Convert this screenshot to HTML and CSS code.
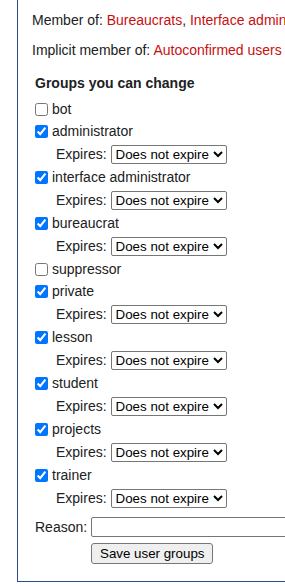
FILE: index.html
```html
<!DOCTYPE html>
<html>
<head>
    <title>User rights</title>
    <link rel="stylesheet" href="styles.css">
</head>
<body>
    <div class="box">
        <p class="member">Member of: <a href="#">Bureaucrats</a>, <a href="#">Interface admin</a></p>
        <p class="member implicit">Implicit member of: <a href="#">Autoconfirmed users</a></p>

        <div class="groups">
            <h4>Groups you can change</h4>

            <div class="group"><label><input type="checkbox"> bot</label></div>

            <div class="group"><label><input type="checkbox" checked> administrator</label></div>
            <div class="expiry">Expires: <select><option>Does not expire</option></select></div>

            <div class="group"><label><input type="checkbox" checked> interface administrator</label></div>
            <div class="expiry">Expires: <select><option>Does not expire</option></select></div>

            <div class="group"><label><input type="checkbox" checked> bureaucrat</label></div>
            <div class="expiry">Expires: <select><option>Does not expire</option></select></div>

            <div class="group"><label><input type="checkbox"> suppressor</label></div>

            <div class="group"><label><input type="checkbox" checked> private</label></div>
            <div class="expiry">Expires: <select><option>Does not expire</option></select></div>

            <div class="group"><label><input type="checkbox" checked> lesson</label></div>
            <div class="expiry">Expires: <select><option>Does not expire</option></select></div>

            <div class="group"><label><input type="checkbox" checked> student</label></div>
            <div class="expiry">Expires: <select><option>Does not expire</option></select></div>

            <div class="group"><label><input type="checkbox" checked> projects</label></div>
            <div class="expiry">Expires: <select><option>Does not expire</option></select></div>

            <div class="group"><label><input type="checkbox" checked> trainer</label></div>
            <div class="expiry">Expires: <select><option>Does not expire</option></select></div>
        </div>

        <div class="reason-row">
            <label class="reason-label">Reason:</label>
            <input type="text" class="reason-input">
        </div>
        <div class="submit-row">
            <button class="save-btn">Save user groups</button>
        </div>
    </div>
</body>
</html>
```

FILE: styles.css
```css
html {
    overflow: hidden;
}

body {
    margin: 0;
    padding-left: 17px;
    font-family: "Liberation Sans", Arial, sans-serif;
    font-size: 14px;
    color: #202122;
    background: #fff;
}

.box {
    border-left: 1px solid #2a4b8d;
    border-bottom: 1px solid #2a4b8d;
    width: 268px;
    height: 582px;
    box-sizing: border-box;
    padding-top: 12px;
    padding-left: 14px;
}

.member {
    margin: 0 0 14px 0;
    line-height: 16px;
    white-space: nowrap;
    overflow: hidden;
}

.member a {
    color: #c80f0f;
    text-decoration: none;
}

.implicit {
    margin-bottom: 0;
}

.groups {
    padding-left: 3px;
    margin-top: 17px;
}

h4 {
    margin: 0 0 7px 0;
    font-size: 14px;
    line-height: 16px;
}

.group {
    height: 22px;
    display: flex;
    align-items: center;
}

.group label {
    display: flex;
    align-items: center;
}

.group input {
    margin: 0 4px 0 0;
    width: 13px;
    height: 13px;
}

.expiry {
    height: 24px;
    display: flex;
    align-items: center;
    padding-left: 21px;
    gap: 4px;
}

.expiry select {
    font-family: "Liberation Sans", Arial, sans-serif;
    font-size: 13.333px;
    height: 19px;
    border: 1px solid #767676;
    border-radius: 2px;
    background: #fff;
    color: #000;
}

.reason-row {
    display: flex;
    align-items: center;
    margin-top: 6px;
    height: 22px;
    gap: 4px;
    padding-left: 3px;
}

.reason-input {
    width: 300px;
    flex-shrink: 0;
    height: 20px;
    box-sizing: border-box;
    border: 1px solid #767676;
    border-radius: 2px;
    padding: 0;
}

.submit-row {
    padding-left: 59px;
    margin-top: 5px;
}

.save-btn {
    font-family: "Liberation Sans", Arial, sans-serif;
    font-size: 13.333px;
    padding: 1px 8px;
    height: 21px;
    border: 1px solid #767676;
    border-radius: 3px;
    background: #efefef;
    color: #000;
}
```
